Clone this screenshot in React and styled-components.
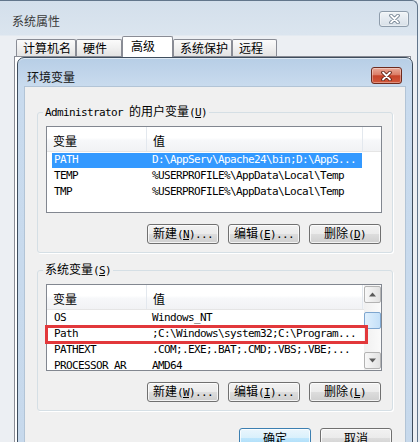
import React from 'react';
import styled, { createGlobalStyle } from 'styled-components';

const GlobalStyle = createGlobalStyle`
  html, body {
    margin: 0;
    padding: 0;
    background: #e8eef4;
  }
  body {
    font-family: "Noto Sans CJK SC", "Noto Sans", sans-serif;
    font-size: 12px;
    color: #000;
  }
  * {
    box-sizing: border-box;
  }
`;

const Screen = styled.div`
  width: 420px;
  height: 442px;
  overflow: hidden;
  background: #e8eef4;
`;

const OuterWindow = styled.div`
  position: relative;
  width: 418px;
  height: 442px;
  border-top: 1px solid #62768b;
  border-right: 1px solid #62768b;
  border-top-right-radius: 6px;
  background: linear-gradient(to bottom, #d3dfeb 0, #dbe5ef 34px, #eceff3 35px, #eceff3 100%);
`;

const OuterTitle = styled.div`
  height: 35px;
  display: flex;
  justify-content: space-between;
  align-items: flex-start;
  padding: 10px 8px 0 12px;
`;

const TitleText = styled.span`
  line-height: 17px;
  margin-top: 1px;
  color: ${(p) => (p.$dim ? '#3a3a3a' : '#111')};
`;

const CloseButton = styled.div`
  width: ${(p) => (p.$red ? 31 : 30)}px;
  height: ${(p) => (p.$red ? 17 : 16)}px;
  border-radius: 3px;
  display: flex;
  align-items: center;
  justify-content: center;
  border: 1px solid ${(p) => (p.$red ? '#6e2a1d' : '#8e9cab')};
  background: ${(p) =>
    p.$red
      ? 'linear-gradient(to bottom, #e9a998 0, #dc7d67 45%, #c6432a 52%, #d2583b 100%)'
      : 'linear-gradient(to bottom, #f1f4f7 0, #e4eaf0 50%, #d8e0e8 100%)'};
  box-shadow: inset 0 0 0 1px rgba(255, 255, 255, 0.35);
`;

const TabStrip = styled.div`
  height: 20px;
  display: flex;
  align-items: flex-end;
  padding-left: 16px;
  position: relative;
  z-index: 1;
`;

const Tab = styled.div`
  width: ${(p) => p.$w}px;
  height: ${(p) => (p.$active ? 21 : 17)}px;
  margin-bottom: ${(p) => (p.$active ? -1 : 0)}px;
  padding-left: ${(p) => (p.$active ? 8 : 6)}px;
  padding-top: ${(p) => (p.$active ? 2 : 1)}px;
  border: 1px solid #898c95;
  border-bottom: none;
  border-radius: 2px 2px 0 0;
  line-height: 14px;
  white-space: nowrap;
  background: ${(p) =>
    p.$active ? '#fff' : 'linear-gradient(to bottom, #fbfbfb 0, #f0f0f0 50%, #e3e3e3 100%)'};
`;

const TabPanel = styled.div`
  margin: 0 6px 0 14px;
  height: 400px;
  border: 1px solid #898c95;
  background: #fff;
`;

const Dialog = styled.div`
  position: absolute;
  left: 17px;
  top: 56px;
  width: 396px;
  height: 400px;
  z-index: 2;
  display: flex;
  flex-direction: column;
  padding: 0 6px;
  border: 1px solid #3e4d5d;
  border-radius: 7px 7px 0 0;
  background: linear-gradient(to bottom, #b7cee6 0, #c9dbee 28px, #c7d9ec 100%);
  box-shadow: inset 0 1px 0 rgba(255, 255, 255, 0.55);
`;

const DialogTitle = styled.div`
  height: 28px;
  display: flex;
  justify-content: space-between;
  align-items: flex-start;
  padding: 9px 4px 0 3px;
`;

const DialogBody = styled.div`
  flex: 1;
  border: 1px solid #b2c4d6;
  background: #f0f0f0;
  padding: 17px 12px 0 12px;
`;

const Group = styled.fieldset`
  margin: ${(p) => (p.$first ? 0 : 9)}px 0 0 0;
  padding: 6px 10px 8px 8px;
  width: 356px;
  min-width: 0;
  border: 1px solid #d5dfe5;
  border-radius: 3px;
  box-shadow: 1px 1px 0 #fff;
`;

const Legend = styled.legend`
  padding: 0 2px;
  margin-left: -3px;
  line-height: 14px;
  font-size: 12px;
`;

const Latin = styled.span`
  font-family: "DejaVu Sans Mono", "Liberation Mono", monospace;
  font-size: 11px;
  letter-spacing: -0.62px;
`;

const ListBox = styled.div`
  position: relative;
  height: 87px;
  display: flex;
  border: 1px solid #828790;
  background: #fff;
`;

const ListMain = styled.div`
  flex: 1;
  min-width: 0;
  display: flex;
  flex-direction: column;
  overflow: hidden;
`;

const Header = styled.div`
  height: 25px;
  flex: none;
  display: flex;
  border-bottom: 1px solid #e5e5e5;
  background: linear-gradient(to bottom, #ffffff 0, #ffffff 45%, #f7f8fa 55%, #f1f2f4 100%);
`;

const HeaderCell = styled.div`
  width: ${(p) => (p.$w ? `${p.$w}px` : 'auto')};
  flex: ${(p) => (p.$w ? 'none' : 1)};
  display: flex;
  align-items: center;
  padding: 3px 0 0 6px;
  border-right: ${(p) => (p.$w ? '1px solid #e3e8ee' : 'none')};
`;

const Rows = styled.div`
  padding-left: 5px;
`;

const Row = styled.div`
  width: 310px;
  height: 15px;
  margin-top: 1px;
  display: flex;
  align-items: flex-start;
  color: ${(p) => (p.$selected ? '#fff' : '#000')};
  background: ${(p) => (p.$selected ? '#3399ff' : 'transparent')};
`;

const Cell = styled.div`
  width: ${(p) => (p.$w ? `${p.$w}px` : 'auto')};
  flex: ${(p) => (p.$w ? 'none' : 1)};
  padding-left: 2px;
  white-space: nowrap;
  line-height: 13px;
  font-family: "DejaVu Sans Mono", "Liberation Mono", monospace;
  font-size: 11px;
  letter-spacing: -0.62px;
`;

const ScrollBar = styled.div`
  width: 17px;
  flex: none;
  display: flex;
  flex-direction: column;
  padding: 1px 0 1px;
  background: linear-gradient(to right, #f0f0f0, #fafafa);
`;

const ScrollButton = styled.div`
  height: 17px;
  display: flex;
  align-items: center;
  justify-content: center;
  border: 1px solid #b3b3b3;
  border-radius: 2px;
  background: linear-gradient(to right, #f8f8f8, #e2e2e2);
`;

const Thumb = styled.div`
  height: 17px;
  margin-top: 9px;
  border: 1px solid #7ea6cf;
  border-radius: 2px;
  background: linear-gradient(to right, #e0f0fd, #c4e0f8);
`;

const Spacer = styled.div`
  flex: 1;
`;

const Mark = styled.div`
  position: absolute;
  left: -2px;
  top: 40px;
  width: 323px;
  height: 19px;
  border: 3px solid #e2383b;
  pointer-events: none;
`;

const ButtonRow = styled.div`
  display: flex;
  justify-content: flex-end;
  gap: 9px;
  margin-top: ${(p) => p.$top}px;
  padding-right: 1px;
`;

const Button = styled.div`
  width: 72px;
  height: 20px;
  display: flex;
  align-items: center;
  justify-content: center;
  white-space: nowrap;
  line-height: 14px;
  border-radius: 3px;
  border: 1px solid ${(p) => (p.$default ? '#3c7fb1' : '#707070')};
  background: ${(p) =>
    p.$default
      ? 'linear-gradient(to bottom, #eaf6fd 0, #d9f0fc 50%, #bee6fd 50%, #a7d9f5 100%)'
      : 'linear-gradient(to bottom, #f2f2f2 0, #ebebeb 50%, #dddddd 50%, #cfcfcf 100%)'};
  box-shadow: inset 0 0 0 1px rgba(255, 255, 255, 0.75);
`;

const CloseGlyph = ({ outline }) => (
  <svg width="13" height="10" viewBox="0 0 13 10">
    <path d="M3 1.5 L10 8.5 M10 1.5 L3 8.5" stroke={outline} strokeWidth="3.6" strokeLinecap="round" fill="none" />
    <path d="M3 1.5 L10 8.5 M10 1.5 L3 8.5" stroke="#fff" strokeWidth="1.8" strokeLinecap="round" fill="none" />
  </svg>
);

const Arrow = ({ down }) => (
  <svg width="7" height="5" viewBox="0 0 7 5">
    <polygon points={down ? '0,0.5 7,0.5 3.5,4.5' : '0,4.5 7,4.5 3.5,0.5'} fill="#5a5a5a" />
  </svg>
);

const Hotkey = ({ zh, k, dots }) => (
  <span>
    {zh}
    <Latin>
      (<u>{k}</u>){dots ? '...' : ''}
    </Latin>
  </span>
);

const userVars = [
  { name: 'PATH', value: 'D:\\AppServ\\Apache24\\bin;D:\\AppS...', selected: true },
  { name: 'TEMP', value: '%USERPROFILE%\\AppData\\Local\\Temp' },
  { name: 'TMP', value: '%USERPROFILE%\\AppData\\Local\\Temp' },
];

const systemVars = [
  { name: 'OS', value: 'Windows_NT' },
  { name: 'Path', value: ';C:\\Windows\\system32;C:\\Program...' },
  { name: 'PATHEXT', value: '.COM;.EXE;.BAT;.CMD;.VBS;.VBE;...' },
  { name: 'PROCESSOR_AR', value: 'AMD64' },
];

const tabs = [
  { label: '计算机名', w: 60 },
  { label: '硬件', w: 46 },
  { label: '高级', w: 51, active: true },
  { label: '系统保护', w: 59 },
  { label: '远程', w: 45 },
];

function VarList({ items, scroll, marked }) {
  return (
    <ListBox>
      <ListMain>
        <Header>
          <HeaderCell $w={100}>变量</HeaderCell>
          <HeaderCell $w={216}>值</HeaderCell>
          <HeaderCell />
        </Header>
        <Rows>
          {items.map((it) => (
            <Row key={it.name} $selected={it.selected}>
              <Cell $w={98}>{it.name}</Cell>
              <Cell>{it.value}</Cell>
            </Row>
          ))}
        </Rows>
      </ListMain>
      {scroll && (
        <ScrollBar>
          <ScrollButton>
            <Arrow />
          </ScrollButton>
          <Thumb />
          <Spacer />
          <ScrollButton>
            <Arrow down />
          </ScrollButton>
        </ScrollBar>
      )}
      {marked && <Mark />}
    </ListBox>
  );
}

export default function App() {
  return (
    <Screen>
      <GlobalStyle />
      <OuterWindow>
        <OuterTitle>
          <TitleText $dim>系统属性</TitleText>
          <CloseButton>
            <CloseGlyph outline="#6f7e8e" />
          </CloseButton>
        </OuterTitle>
        <TabStrip>
          {tabs.map((t) => (
            <Tab key={t.label} $w={t.w} $active={t.active}>
              {t.label}
            </Tab>
          ))}
        </TabStrip>
        <TabPanel />

        <Dialog>
          <DialogTitle>
            <TitleText>环境变量</TitleText>
            <CloseButton $red>
              <CloseGlyph outline="#5b1d12" />
            </CloseButton>
          </DialogTitle>
          <DialogBody>
            <Group $first>
              <Legend>
                <Latin>Administrator </Latin>的用户变量<Latin>(<u>U</u>)</Latin>
              </Legend>
              <VarList items={userVars} />
              <ButtonRow $top={11}>
                <Button><Hotkey zh="新建" k="N" dots /></Button>
                <Button><Hotkey zh="编辑" k="E" dots /></Button>
                <Button><Hotkey zh="删除" k="D" /></Button>
              </ButtonRow>
            </Group>

            <Group>
              <Legend>
                系统变量<Latin>(<u>S</u>)</Latin>
              </Legend>
              <VarList items={systemVars} scroll marked />
              <ButtonRow $top={11}>
                <Button><Hotkey zh="新建" k="W" dots /></Button>
                <Button><Hotkey zh="编辑" k="I" dots /></Button>
                <Button><Hotkey zh="删除" k="L" /></Button>
              </ButtonRow>
            </Group>

            <ButtonRow $top={17}>
              <Button $default>确定</Button>
              <Button>取消</Button>
            </ButtonRow>
          </DialogBody>
        </Dialog>
      </OuterWindow>
    </Screen>
  );
}
